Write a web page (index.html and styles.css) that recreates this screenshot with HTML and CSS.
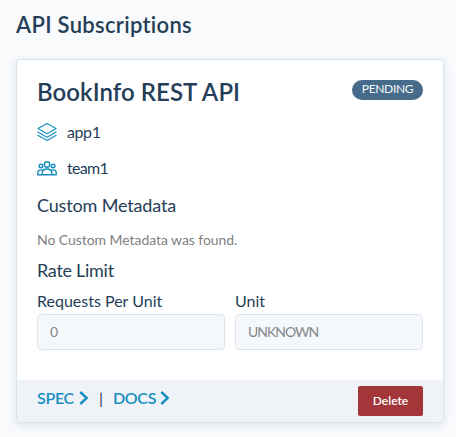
FILE: index.html
```html
<!DOCTYPE html>
<html lang="en">
<head>
<meta charset="utf-8">
<title>API Subscriptions</title>
<link rel="stylesheet" href="styles.css">
</head>
<body>
<main class="page">
  <h1 class="page-title">API Subscriptions</h1>
  <article class="card">
    <div class="card-body">
      <header class="card-header">
        <h2 class="card-title">BookInfo REST API</h2>
        <span class="badge">PENDING</span>
      </header>
      <div class="meta">
        <svg class="icon layers" viewBox="0 0 20 20" aria-hidden="true"><path d="M10 1.6 19 6.6l-9 5.1-9-5.1zM.8 10.1l9.2 5.1 9.2-5.1M.8 13.3l9.2 5.1 9.2-5.1"/></svg>
        <span class="meta-text app">app1</span>
      </div>
      <div class="meta">
        <svg class="icon" viewBox="0 0 20 20" aria-hidden="true"><circle cx="10" cy="6.5" r="2.7"/><circle cx="3.9" cy="8" r="1.8"/><circle cx="16.1" cy="8" r="1.8"/><path d="M5.2 16.7v-1.5c0-2.7 2-4.2 4.8-4.2s4.8 1.5 4.8 4.2v1.5zM5.2 16.7H.7v-1.5c0-2.1 1.2-3.3 3.2-3.3.8 0 1.5.2 2 .6M14.8 16.7h4.5v-1.5c0-2.1-1.2-3.3-3.2-3.3-.8 0-1.5.2-2 .6"/></svg>
        <span class="meta-text team">team1</span>
      </div>
      <h3 class="section-title custom">Custom Metadata</h3>
      <p class="empty">No Custom Metadata was found.</p>
      <h3 class="section-title rate">Rate Limit</h3>
      <div class="fields">
        <div class="field"><span class="label">Requests Per Unit</span><div class="input">0</div></div>
        <div class="field"><span class="label">Unit</span><div class="input">UNKNOWN</div></div>
      </div>
    </div>
    <footer class="card-footer">
      <nav class="links">
        <a class="link"><span>SPEC</span><svg class="chevron" viewBox="0 0 10 14" aria-hidden="true"><path d="m1.3 1 6.4 6-6.4 6"/></svg></a>
        <span class="divider">|</span>
        <a class="link docs"><span>DOCS</span><svg class="chevron" viewBox="0 0 10 14" aria-hidden="true"><path d="m1.3 1 6.4 6-6.4 6"/></svg></a>
      </nav>
      <button class="delete">Delete</button>
    </footer>
  </article>
</main>
</body>
</html>
```
FILE: styles.css
```css
* { box-sizing: border-box; }
body {
  margin: 0;
  background: #f9fafc;
  color: #253e58;
  font-family: Lato, "Open Sans", sans-serif;
  font-size: 16px;
}
h1, h2, h3, p { margin: 0; }
.page { height: 437px; padding: 10px 12px 0 16px; overflow: hidden; }
.page-title { font-size: 22px; line-height: 30px; font-weight: 600; letter-spacing: .3px; }
.card {
  width: 428px;
  height: 364px;
  margin-top: 19px;
  display: flex;
  flex-direction: column;
  background: #fff;
  border: 1px solid #d9e4f0;
  border-radius: 4px;
  box-shadow: 0 2px 8px #dbe4ee;
  overflow: hidden;
}
.card-body { flex: 1; padding: 17px 20px 0; }
.card-header { display: flex; justify-content: space-between; align-items: flex-start; height: 37px; }
.card-title { font-size: 24px; line-height: 30px; font-weight: 600; letter-spacing: .05px; }
.badge {
  width: 71px;
  height: 20px;
  margin-top: 3px;
  border-radius: 10px;
  background: #476b8a;
  color: #f3f7fa;
  font-size: 12px;
  line-height: 18px;
  letter-spacing: -.35px;
  text-align: center;
}
.meta { display: flex; align-items: center; gap: 10px; height: 36px; }
.icon { width: 20px; height: 20px; fill: none; stroke: #168fc0; stroke-width: 1.4; stroke-linejoin: round; stroke-linecap: round; }
.layers { stroke-width: 1.15; }
.meta-text { line-height: 20px; }
.app { letter-spacing: -.4px; }
.team { letter-spacing: -.7px; }
.section-title { font-size: 18px; font-weight: 400; line-height: 24px; letter-spacing: -.15px; }
.custom { margin-top: 7px; }
.empty { margin-top: 13px; color: #7f7f7f; font-size: 14px; line-height: 20px; letter-spacing: -.06px; }
.rate { margin-top: 8px; letter-spacing: -.28px; }
.fields { display: grid; grid-template-columns: 1fr 1fr; gap: 10px; margin-top: 8px; }
.label { display: block; height: 24px; line-height: 21px; }
.input {
  height: 36px;
  padding: 0 12px;
  border: 1px solid #e1e5ea;
  border-radius: 4px;
  background: #f4f8fa;
  color: #858889;
  font-size: 14px;
  line-height: 34px;
  letter-spacing: -1px;
}
.card-footer {
  height: 42px;
  padding: 0 20px;
  display: flex;
  align-items: flex-start;
  justify-content: space-between;
  background: #eff3f7;
}
.links { display: flex; align-items: center; height: 34px; padding-top: 1px; }
.link { display: flex; align-items: center; gap: 5px; color: #168fc0; font-weight: 600; letter-spacing: -.3px; }
.docs { gap: 4px; }
.chevron { width: 10px; height: 14px; fill: none; stroke: currentColor; stroke-width: 2.4; }
.divider { width: 24px; text-align: center; }
.delete {
  width: 65px;
  height: 30px;
  margin-top: 6px;
  padding: 0 0 2px;
  border: 0;
  border-radius: 2px;
  background: #a23639;
  color: #fff;
  font: 600 12px Lato, sans-serif;
}
```
